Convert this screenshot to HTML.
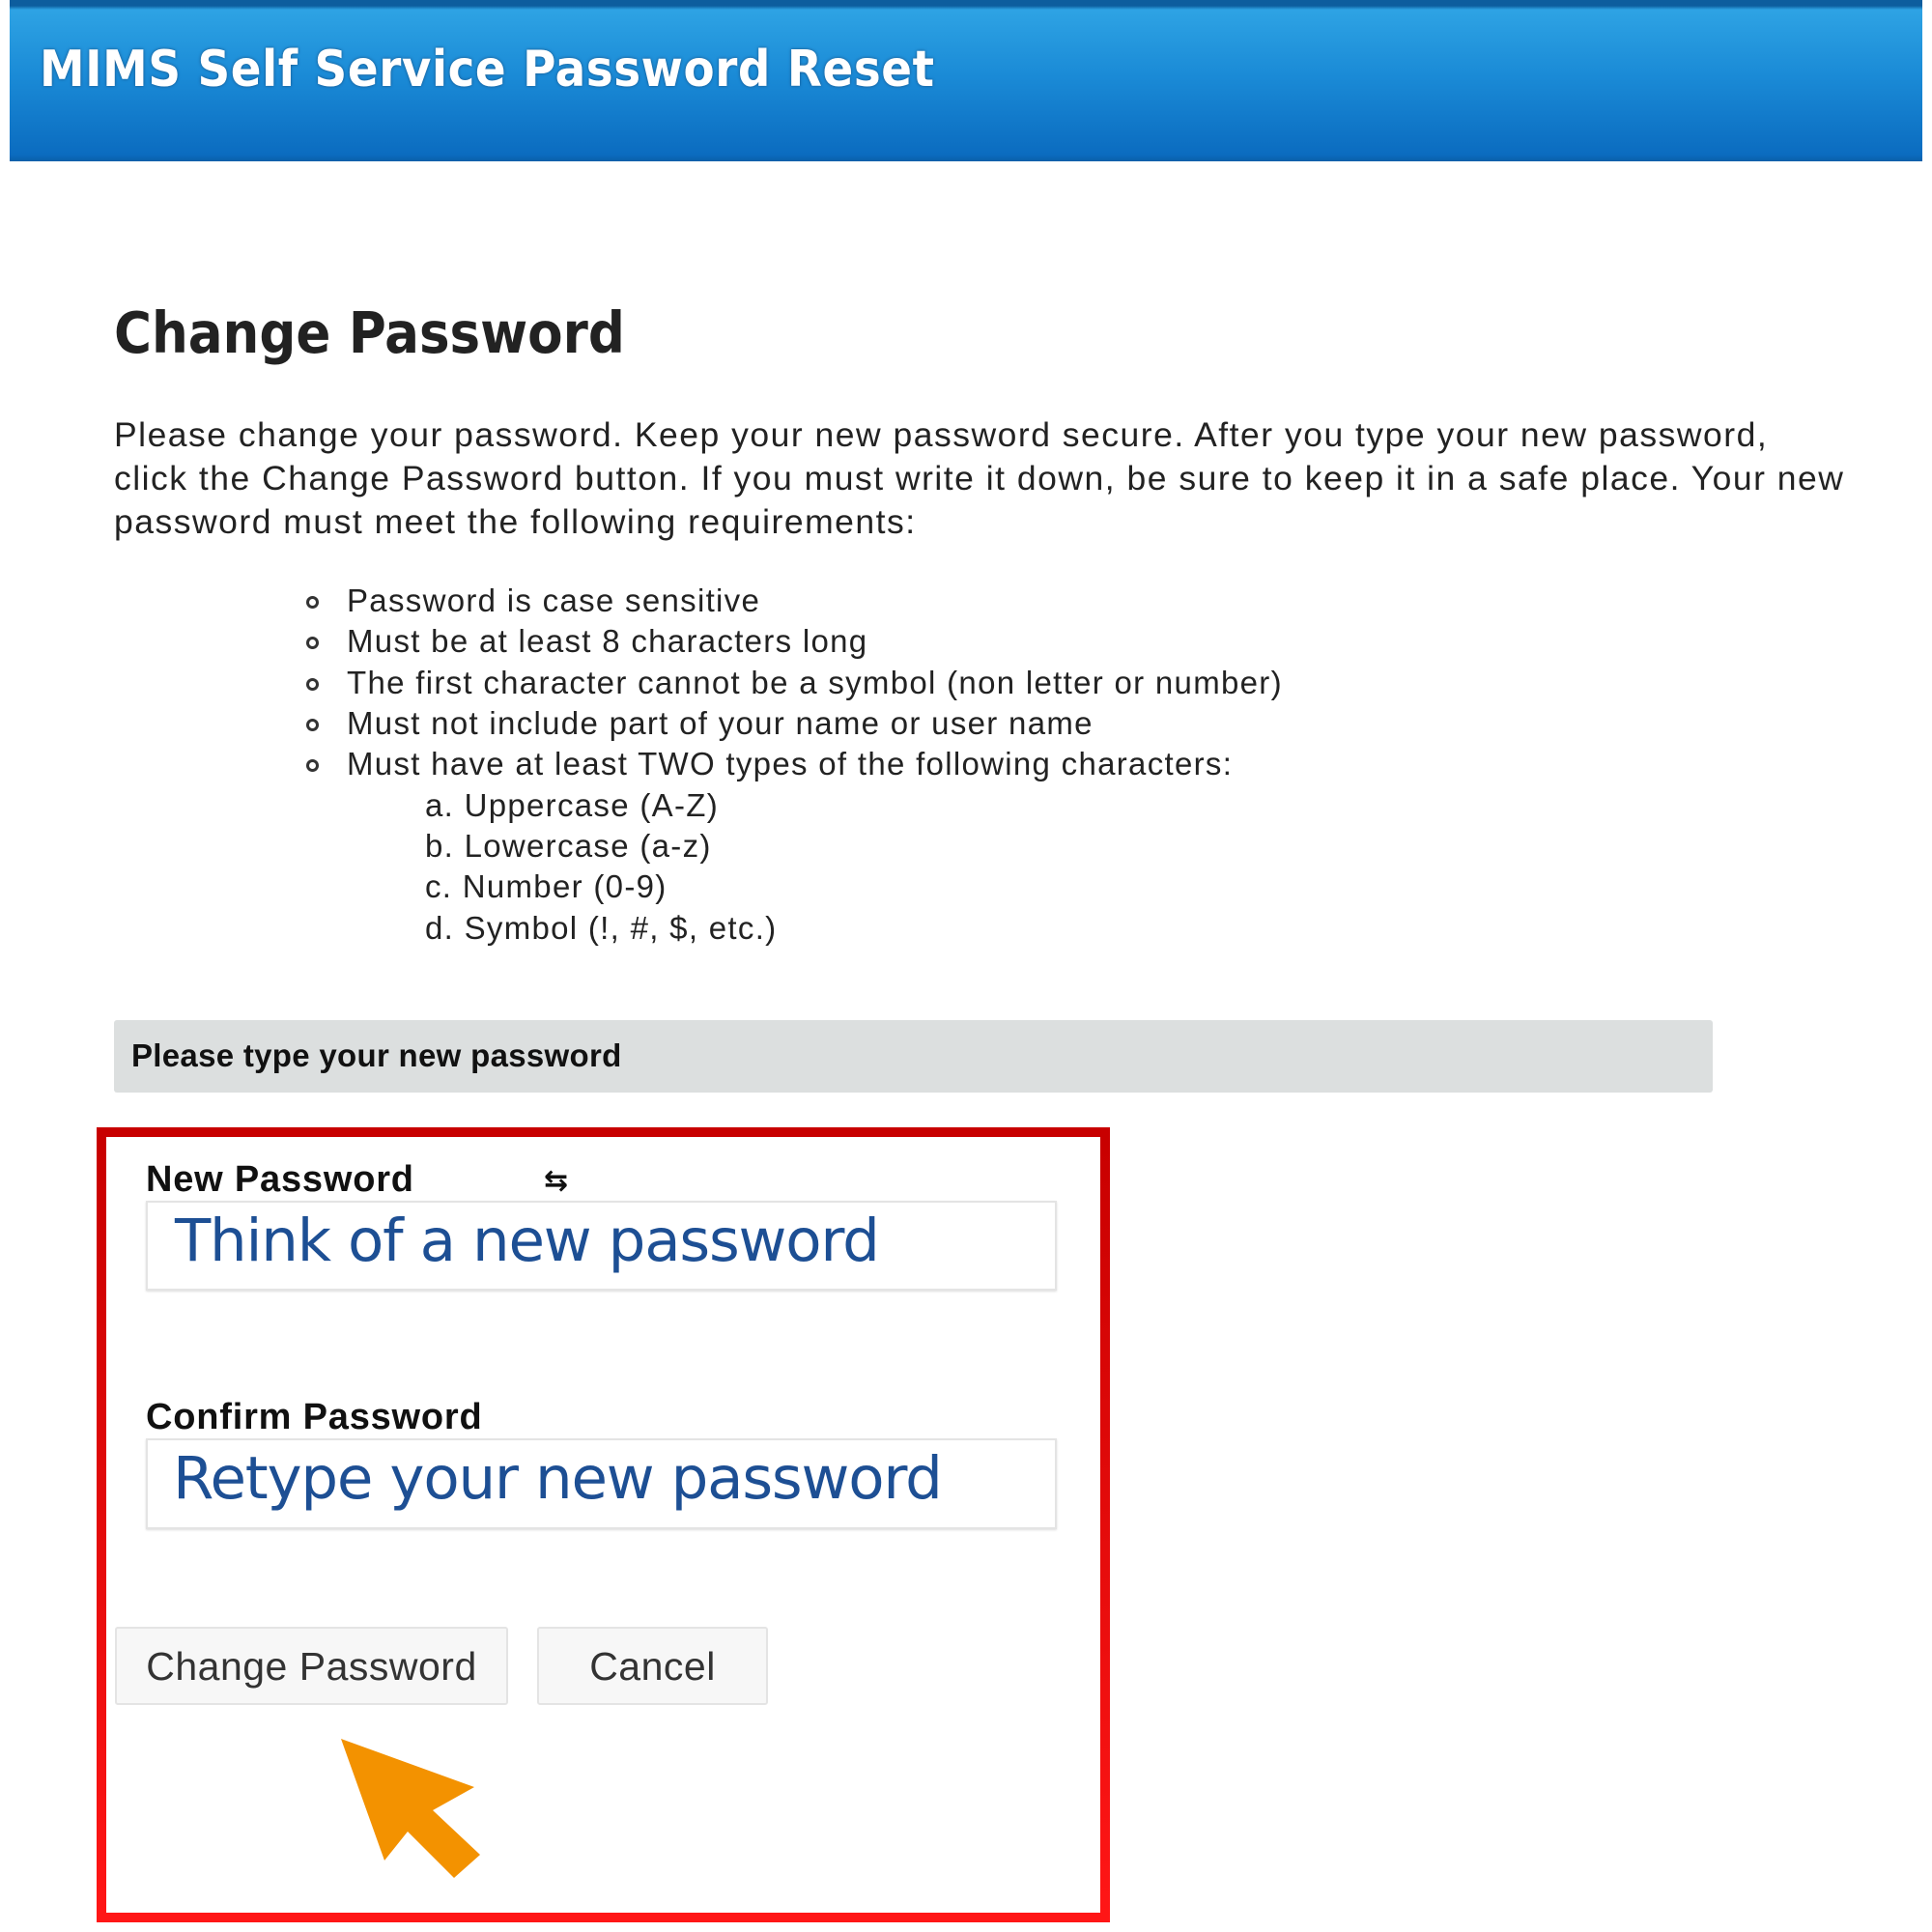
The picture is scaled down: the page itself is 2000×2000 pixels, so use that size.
<!DOCTYPE html>
<html><head><meta charset="utf-8"><style>
*{margin:0;padding:0;box-sizing:border-box}
body{width:2000px;height:2000px;background:#fff;position:relative;overflow:hidden;font-family:"Liberation Sans",Arial,sans-serif;color:#222}
.a{position:absolute;white-space:nowrap}
#hdr{left:10px;top:0;width:1980px;height:167px;background:linear-gradient(#0d5d9e 0,#0d5d9e 6px,#2ea3e4 10px,#1a8ad6 80px,#0b6cc0 160px,#0a5fa8 167px)}
#ttl{left:41px;top:42px;font:bold 52px "DejaVu Sans Condensed","DejaVu Sans",sans-serif;color:#fff;text-shadow:0 0 3px #1a4f80;letter-spacing:0.6px}
#h1{left:118px;top:310px;font:bold 59px "DejaVu Sans Condensed","DejaVu Sans",sans-serif;color:#222}
.p{font-size:35.5px;color:#222;letter-spacing:1.5px}
.li{font-size:33px;color:#222;letter-spacing:1.3px}
.dot{width:13px;height:13px;border:3px solid #333;border-radius:50%}
#bar{left:118px;top:1056px;width:1655px;height:75px;background:#dcdfdf;border-radius:3px}
#bar span{position:absolute;left:18px;top:18px;font:bold 33px "Liberation Sans",sans-serif;letter-spacing:0.3px;color:#111}
#red{left:100px;top:1167px;width:1049px;height:823px;border:10px solid;border-image:linear-gradient(#c80000,#ff1616) 1}
.lbl{font:bold 38px "Liberation Sans",sans-serif;color:#111;letter-spacing:0.8px}
.inp{border:2px solid #e4e4e4;background:#fff;box-shadow:0 1px 2px #ddd}
.ph{font-family:"DejaVu Sans","Liberation Sans",sans-serif;color:#1d4f94;font-size:61px;letter-spacing:-1.2px;font-weight:400}
.btn{border:2px solid #e4e4e4;background:#f7f7f7;border-radius:3px;font-size:41px;color:#333;text-align:center;line-height:78px;letter-spacing:0.5px}
</style></head><body>
<div id="hdr" class="a"></div>
<div id="ttl" class="a">MIMS Self Service Password Reset</div>
<div id="h1" class="a">Change Password</div>
<div class="a p" style="left:118px;top:430px">Please change your password. Keep your new password secure. After you type your new password,</div>
<div class="a p" style="left:118px;top:475px">click the Change Password button. If you must write it down, be sure to keep it in a safe place. Your new</div>
<div class="a p" style="left:118px;top:520px">password must meet the following requirements:</div>

<div class="a dot" style="left:317px;top:617px"></div><div class="a li" style="left:359px;top:603px">Password is case sensitive</div>
<div class="a dot" style="left:317px;top:659px"></div><div class="a li" style="left:359px;top:645px">Must be at least 8 characters long</div>
<div class="a dot" style="left:317px;top:702px"></div><div class="a li" style="left:359px;top:688px">The first character cannot be a symbol (non letter or number)</div>
<div class="a dot" style="left:317px;top:744px"></div><div class="a li" style="left:359px;top:730px">Must not include part of your name or user name</div>
<div class="a dot" style="left:317px;top:786px"></div><div class="a li" style="left:359px;top:772px">Must have at least TWO types of the following characters:</div>
<div class="a li" style="left:440px;top:815px">a. Uppercase (A-Z)</div>
<div class="a li" style="left:440px;top:857px">b. Lowercase (a-z)</div>
<div class="a li" style="left:440px;top:899px">c. Number (0-9)</div>
<div class="a li" style="left:440px;top:942px">d. Symbol (!, #, $, etc.)</div>

<div id="bar" class="a"><span>Please type your new password</span></div>

<div id="red" class="a"></div>
<div class="a lbl" style="left:151px;top:1200px">New Password</div>
<div class="a" style="left:563px;top:1205px;font:bold 30px 'DejaVu Sans',sans-serif;color:#111">⇆</div>
<div class="a inp" style="left:151px;top:1243px;width:943px;height:93px"></div>
<div class="a ph" style="left:181px;top:1249px">Think of a new password</div>
<div class="a lbl" style="left:151px;top:1446px">Confirm Password</div>
<div class="a inp" style="left:151px;top:1489px;width:943px;height:94px"></div>
<div class="a ph" style="left:179px;top:1495px">Retype your new password</div>
<div class="a btn" style="left:119px;top:1684px;width:407px;height:81px">Change Password</div>
<div class="a btn" style="left:556px;top:1684px;width:239px;height:81px">Cancel</div>
<svg class="a" style="left:0;top:0" width="2000" height="2000"><polygon points="353,1800 491,1850 448,1874 497,1920 470,1944 422,1896 398,1926" fill="#f39200"/></svg>
</body></html>
